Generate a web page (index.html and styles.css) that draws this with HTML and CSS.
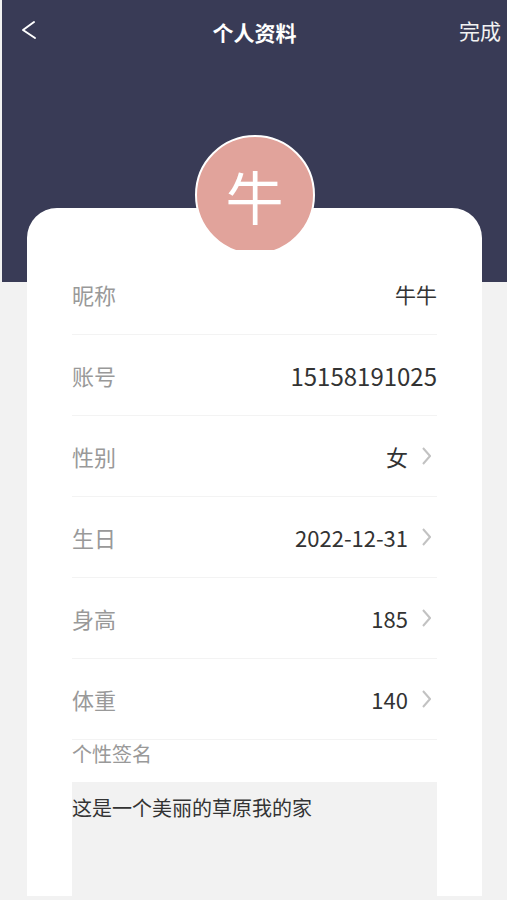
FILE: index.html
```html
<!DOCTYPE html>
<html lang="zh-CN">
<head>
    <meta charset="UTF-8">
    <title>个人资料</title>
    <link rel="stylesheet" href="styles.css">
</head>
<body>
<div class="header">
    <div class="nav">
        <a class="back" href="#">
            <svg width="20" height="24" viewBox="0 0 20 24"><polyline points="14,3 3,11 15,19" fill="none" stroke="#fff" stroke-width="2" stroke-linecap="round" stroke-linejoin="round"/></svg>
        </a>
        <h3 class="title">个人资料</h3>
        <a class="done" href="#">完成</a>
    </div>
</div>
<div class="card">
    <div class="avatar-wrap">
        <div class="avatar">牛</div>
    </div>
    <ul class="info">
        <li class="row"><span class="label">昵称</span><span class="value name">牛牛</span></li>
        <li class="row"><span class="label">账号</span><span class="value account">15158191025</span></li>
        <li class="row"><span class="label">性别</span><span class="value">女</span><svg class="arrow" width="10" height="18" viewBox="0 0 10 18"><polyline points="2,1 9,9 2,17" fill="none" stroke="#c2c2c2" stroke-width="2"/></svg></li>
        <li class="row"><span class="label">生日</span><span class="value">2022-12-31</span><svg class="arrow" width="10" height="18" viewBox="0 0 10 18"><polyline points="2,1 9,9 2,17" fill="none" stroke="#c2c2c2" stroke-width="2"/></svg></li>
        <li class="row"><span class="label">身高</span><span class="value">185</span><svg class="arrow" width="10" height="18" viewBox="0 0 10 18"><polyline points="2,1 9,9 2,17" fill="none" stroke="#c2c2c2" stroke-width="2"/></svg></li>
        <li class="row"><span class="label">体重</span><span class="value">140</span><svg class="arrow" width="10" height="18" viewBox="0 0 10 18"><polyline points="2,1 9,9 2,17" fill="none" stroke="#c2c2c2" stroke-width="2"/></svg></li>
    </ul>
    <div class="sign">
        <p class="sign-title">个性签名</p>
        <div class="sign-box">这是一个美丽的草原我的家</div>
    </div>
</div>
</body>
</html>
```

FILE: styles.css
```css
*{
    padding:0;
    margin:0;
}
ul,ol{
    list-style: none;
}
a{
    text-decoration: none;
}
body{
    background-color: #f2f2f2;
    padding-left: 2px;
    font-family: "Noto Sans CJK SC", "Microsoft YaHei", sans-serif;
}
.header{
    background-color: #393b56;
    height: 282px;
}
.nav{
    display: grid;
    grid-template-columns: 1fr auto 1fr;
    align-items: center;
    height: 60px;
}
.back{
    padding-left: 18px;
    padding-top: 2px;
    display: flex;
}
.title{
    color: #fff;
    font-size: 21px;
    font-weight: bold;
    margin-top: 4px;
}
.done{
    justify-self: end;
    padding-right: 6px;
    color: #f2f2f2;
    font-size: 21px;
}
.card{
    position: relative;
    margin: -74px 25px 0;
    background-color: #fff;
    border-radius: 30px 30px 0 0;
    padding: 46px 45px 0;
}
.avatar-wrap{
    position: absolute;
    top: -73px;
    left: 50%;
    margin-left: -60px;
    width: 120px;
    height: 115px;
    overflow: hidden;
}
.avatar{
    width: 116px;
    height: 116px;
    border: 2px solid #fff;
    border-radius: 50%;
    background-color: #e1a39b;
    color: #fff;
    font-size: 58px;
    line-height: 116px;
    text-align: center;
}
.row{
    display: flex;
    align-items: center;
    height: 80px;
    border-bottom: 1px solid #f3f3f3;
}
.label{
    flex: 1;
    color: #999;
    font-size: 22px;
}
.value{
    color: #333;
    font-size: 22px;
}
.name{
    font-size: 21px;
}
.account{
    font-size: 24px;
}
.arrow{
    margin: 0 6px 0 13px;
}
.sign-title{
    color: #999;
    font-size: 20px;
    line-height: 28px;
}
.sign-box{
    margin-top: 14px;
    height: 102px;
    padding-top: 12px;
    background-color: #f2f2f2;
    color: #333;
    font-size: 20px;
    line-height: 28px;
}
```
